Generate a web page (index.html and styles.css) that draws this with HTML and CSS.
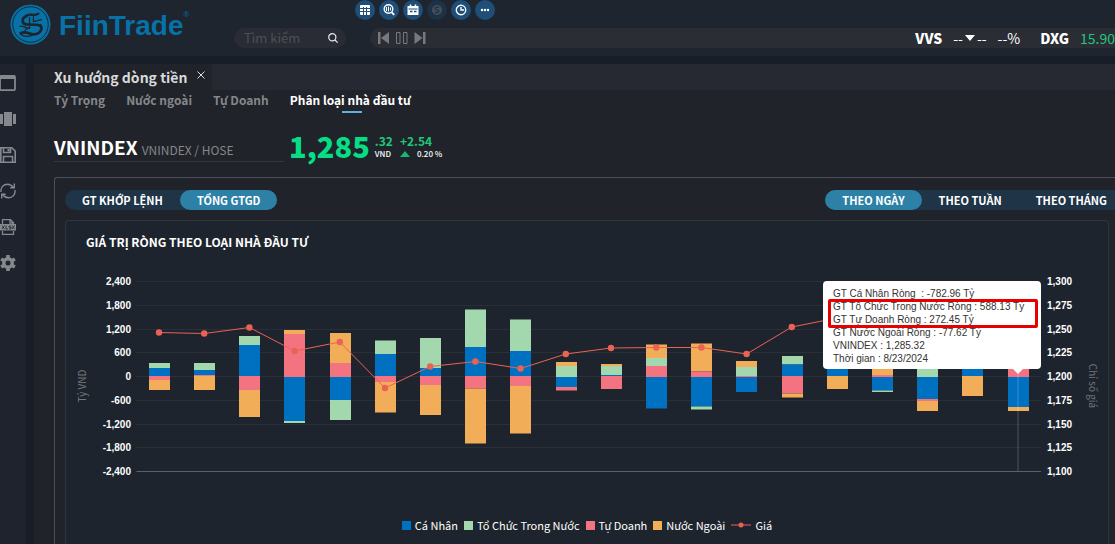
FILE: index.html
```html
<!DOCTYPE html>
<html lang="vi">
<head>
<meta charset="utf-8">
<title>FiinTrade</title>
<link rel="stylesheet" href="styles.css">
</head>
<body>
<header class="header">
  <a class="logo" href="#" aria-label="FiinTrade">
    <svg class="logo-mark" viewBox="0 0 42 42" aria-hidden="true">
      <circle cx="21" cy="21" r="20.5" fill="#0672a8"/>
      <circle cx="21" cy="21" r="18.200" fill="none" stroke="#1e252e" stroke-width="1"/>
      <g fill="none" stroke="#1e252e" stroke-linecap="round" stroke-linejoin="round">
        <path d="M17 12c4-3 6 1 12-2" stroke-width="2.400"/>
        <path d="M17 12c-6 3-5 9 1 9c5 0 9 0 13 1" stroke-width="2.800"/>
        <path d="M31 22c3 3 0 8-5 9c-6 1-9-4-15-1" stroke-width="2.800"/>
        <path d="M20 14v11M24 13v5l8-2M10 23c3-2 5 2 10 2M11 31c3 3 9 3 14 0M18 25c-3 1-4 4-1 5" stroke-width="1.300"/>
      </g>
    </svg>
    <span class="logo-name">FiinTrade</span><sup class="logo-reg">®</sup>
  </a>
  <div class="header-tools">
    <nav class="quick" aria-label="Công cụ">
      <button class="quick-btn" aria-label="Bảng giá"><svg viewBox="0 0 20 20"><rect x="5" y="5" width="10" height="10" rx="1" fill="#fff"/><path d="M5 8.500h10M5 11.500h10M8.500 7v8M11.500 7v8" stroke="#1f4f78"/></svg></button>
      <button class="quick-btn" aria-label="Tra cứu"><svg viewBox="0 0 20 20" fill="none" stroke="#fff"><circle cx="9.500" cy="9" r="4.300" stroke-width="1.400"/><path d="M12.700 12.300l2.500 2.600" stroke-width="1.800"/><path d="M7.500 7v4M9.500 6.500v5M11.500 7.500v3" /></svg></button>
      <button class="quick-btn" aria-label="Lịch sự kiện"><svg viewBox="0 0 20 20"><path d="M4.500 6h11v9h-11z" fill="#fff"/><path d="M7.500 4.500v3M12.500 4.500v3" stroke="#fff" stroke-width="1.600"/><path d="M5.500 9h9" stroke="#1f4f78"/><path d="M7 11.500h2.500M11 11.500h2.500" stroke="#1f4f78" stroke-width="1.500"/></svg></button>
      <button class="quick-btn quick-btn-off" aria-label="Giao dịch" disabled><svg viewBox="0 0 20 20"><circle cx="10" cy="10" r="5" fill="#46505c"/><path d="M12 7.800c-1-1-4-.8-4 .7s4 1.200 4 2.800s-3 1.700-4 .7" stroke="#1d3245" stroke-width="1.200" fill="none"/></svg></button>
      <button class="quick-btn" aria-label="Lịch sử"><svg viewBox="0 0 20 20" fill="none" stroke="#fff" stroke-width="1.400"><circle cx="10" cy="10" r="4.700"/><path d="M10 7v3h3"/></svg></button>
      <button class="quick-btn" aria-label="Thêm"><svg viewBox="0 0 20 20" fill="#fff"><circle cx="7" cy="10" r="1.200"/><circle cx="10" cy="10" r="1.200"/><circle cx="13" cy="10" r="1.200"/></svg></button>
    </nav>
    <div class="header-row">
      <form class="search">
        <input class="search-input" type="text" placeholder="Tìm kiếm" aria-label="Tìm kiếm">
        <button class="icon-btn" type="button" aria-label="Tìm"><svg width="10" height="10" viewBox="0 0 10 10" fill="none" stroke="#e8eaf0" stroke-width="1.200"><circle cx="4.300" cy="4.300" r="3.600"/><path d="M7 7l2.600 2.600"/></svg></button>
      </form>
      <div class="ticker">
        <div class="player">
          <button class="icon-btn" aria-label="Lùi"><svg width="12" height="12" viewBox="0 0 12 12" fill="#77797e"><path d="M0 0h2.500v12H0zM11 0v12L3 6z"/></svg></button>
          <button class="icon-btn" aria-label="Tạm dừng"><svg width="12" height="12" viewBox="0 0 12 12" fill="none" stroke="#77797e"><path d="M.5 .5h3.500v11H.5zM7.500 .5H11v11H7.500z"/></svg></button>
          <button class="icon-btn" aria-label="Tiến"><svg width="12" height="12" viewBox="0 0 12 12" fill="#77797e"><path d="M9 0h2.500v12H9zM.5 0v12l8-6z"/></svg></button>
        </div>
        <div class="quotes">
          <b>VVS</b><span class="quote-change">-- <svg width="10" height="6" viewBox="0 0 10 6"><path d="M0 0h10L5 6z" fill="#fff"/></svg>--</span><span>--%</span>
          <b class="quote-next">DXG</b><span class="up">15.90</span>
        </div>
      </div>
    </div>
  </div>
</header>

<div class="body">
  <aside class="sidebar">
    <button class="icon-btn" aria-label="Cửa sổ"><svg width="16" height="16" viewBox="0 0 16 16"><rect x="0" y=".9" width="15" height="14.200" rx="1" fill="none" stroke="#85888d" stroke-width="1.800"/><path d="M0 .5h15v3.500H0z" fill="#85888d"/></svg></button>
    <button class="icon-btn" aria-label="Bố cục"><svg width="16" height="16" viewBox="0 0 16 16" fill="#85888d"><path d="M4 1h8v14H4zM0 3h3v10H0zM13 3h3v10h-3z"/></svg></button>
    <button class="icon-btn" aria-label="Lưu"><svg width="16" height="16" viewBox="0 0 16 16" fill="none" stroke="#85888d" stroke-width="1.600"><path d="M.8 .8h11l3.400 3.400v11H.8z"/><path d="M3.500 1v4.500h7V1M3.500 15V9.500h9V15"/><path d="M8.500 2v2.500" stroke-width="2"/></svg></button>
    <button class="icon-btn" aria-label="Làm mới"><svg width="16" height="16" viewBox="0 0 16 16" fill="none" stroke="#85888d" stroke-width="1.400"><path d="M1 9c-.6-4.500 2.500-7.800 6.500-7.800c3 0 4.500 1.300 6 3.300M15 7c.6 4.500-2.500 7.800-6.500 7.800c-3 0-4.500-1.300-6-3.300"/><path d="M14.300 .5v4.300h-4M1.700 15.500v-4.300h4"/></svg></button>
    <button class="icon-btn" aria-label="Xuất Excel"><svg width="16" height="16" viewBox="0 0 16 16" fill="none" stroke="#85888d" stroke-width="1.300"><path d="M2.500 5V.7h8l3 3V5M2.500 12v3.300h11V12M10 1v3h3"/><path d="M0 5h16v6.500H0z" fill="#85888d" stroke="none"/><path d="M2 6.500l2.500 3.500M4.500 6.500L2 10M6 6.500V10h2M11 7H9v1.300h2V10H9M12 6.500l2.500 3.500M14.500 6.500L12 10" stroke="#1e232d" stroke-width=".8"/></svg></button>
    <button class="icon-btn" aria-label="Cài đặt"><svg width="16" height="16" viewBox="0 0 16 16"><circle cx="8" cy="8" r="4.200" fill="none" stroke="#85888d" stroke-width="3.400"/><path d="M8 0v3M8 13v3M1.100 4l2.600 1.500M12.300 10.500l2.600 1.500M1.100 12l2.600-1.500M12.300 5.500L14.900 4" stroke="#85888d" stroke-width="3.600"/></svg></button>
  </aside>

  <main class="main">
    <div class="tabbar">
      <div class="tab"><span class="tab-name">Xu hướng dòng tiền</span>
        <button class="icon-btn tab-close" aria-label="Đóng"><svg width="8" height="8" viewBox="0 0 8 8"><path d="M.5 .5l7 7M7.500 .5l-7 7" stroke="#e0e0e0"/></svg></button></div>
    </div>
    <nav class="subtabs">
      <a href="#">Tỷ Trọng</a><a href="#">Nước ngoài</a><a href="#">Tự Doanh</a><a href="#" class="is-active">Phân loại nhà đầu tư</a>
    </nav>
    <section class="index">
      <div class="index-name"><h1 class="index-code">VNINDEX</h1><span class="index-market">VNINDEX / HOSE</span></div>
      <strong class="index-price">1,285</strong>
      <div class="index-col"><span class="index-dec">.32</span><span class="index-unit">VND</span></div>
      <div class="index-col"><span class="index-dec">+2.54</span><span class="index-unit index-pct"><svg width="10" height="6" viewBox="0 0 10 6"><path d="M0 6h10L5 0z" fill="#16b877"/></svg>0.20 %</span></div>
    </section>

    <section class="panel">
      <div class="toggles">
        <div class="pill"><button class="pill-btn">GT KHỚP LỆNH</button><button class="pill-btn is-on">TỔNG GTGD</button></div>
        <div class="pill pill-right"><button class="pill-btn is-on">THEO NGÀY</button><button class="pill-btn">THEO TUẦN</button><button class="pill-btn">THEO THÁNG</button></div>
      </div>
      <article class="card">
        <h2 class="card-title">GIÁ TRỊ RÒNG THEO LOẠI NHÀ ĐẦU TƯ</h2>
        <div class="chart">
          <svg class="chart-svg" id="chart" viewBox="66 262 1042 230" role="img" aria-label="Giá trị ròng theo loại nhà đầu tư"></svg>
          <div class="tooltip">
            <div>GT Cá Nhân Ròng &nbsp;: -782.96 Tỷ</div>
            <div>GT Tổ Chức Trong Nước Ròng : 588.13 Tỷ</div>
            <div>GT Tự Doanh Ròng : 272.45 Tỷ</div>
            <div>GT Nước Ngoài Ròng : -77.62 Tỷ</div>
            <div>VNINDEX : 1,285.32</div>
            <div>Thời gian : 8/23/2024</div>
            <span class="marker"></span>
          </div>
        </div>
        <ul class="legend">
          <li><i class="swatch swatch-blue"></i>Cá Nhân</li>
          <li><i class="swatch swatch-green"></i>Tổ Chức Trong Nước</li>
          <li><i class="swatch swatch-pink"></i>Tự Doanh</li>
          <li><i class="swatch swatch-orange"></i>Nước Ngoài</li>
          <li><svg class="legend-line" width="20" height="8" viewBox="0 0 20 8"><path d="M0 4h20" stroke="#ea6254"/><circle cx="10" cy="4" r="2.500" fill="#ea6254"/></svg>Giá</li>
        </ul>
      </article>
    </section>
  </main>
</div>
<script src="chart.js"></script>
</body>
</html>
```

FILE: styles.css
```css
* { box-sizing: border-box; }
body {
  margin: 0;
  min-height: 100vh;
  display: flex;
  flex-direction: column;
  overflow: hidden;
  background: #191d27;
  color: #fff;
  font-family: "Noto Sans CJK SC", "Noto Sans", sans-serif;
  font-size: 12px;
  line-height: 20px;
}
button, input { font: inherit; color: inherit; border: 0; background: none; padding: 0; margin: 0; }
svg { display: block; }
a { color: inherit; text-decoration: none; }
.icon-btn { display: flex; }
.up { color: #1fc77c; }

.header { display: flex; height: 56px; padding-left: 10px; background: #1e252e; }
.logo { display: flex; flex: none; width: 224px; color: #0672a8; padding-top: 4px; }
.logo-mark { width: 41px; height: 41px; margin-right: 8px; }
.logo-name { font: bold 28px/44px "Liberation Sans", Arial, sans-serif; }
.logo-reg { font: 8px/22px "Liberation Sans", Arial, sans-serif; }
.header-tools { flex: 1; min-width: 0; display: flex; flex-direction: column; gap: 8px; }
.quick { display: flex; gap: 4px; padding-left: 121px; }
.quick-btn { width: 20px; height: 20px; border-radius: 50%; background: #1f4f78; }
.quick-btn-off { background: #1d3245; }
.header-row { display: flex; gap: 24px; }
.search { display: flex; align-items: center; width: 112px; height: 20px; padding: 0 8px 0 10px; border-radius: 10px; background: #292c34; }
.search-input { flex: 1; min-width: 0; height: 20px; font-size: 13px; outline: 0; }
.search-input::placeholder { color: #4d5057; opacity: 1; }
.ticker { flex: 1; display: flex; justify-content: space-between; align-items: center; height: 20px; padding-left: 8px; border-radius: 10px 0 0 10px; background: #2a2d34; }
.player { display: flex; gap: 6px; }
.quotes { display: flex; gap: 11px; font-size: 14px; line-height: 18px; white-space: nowrap; }
.quotes b { font-weight: 900; }
.quote-change { display: flex; align-items: center; gap: 2px; }
.quotes .quote-next { margin-left: 9px; }

.body { flex: 1; display: flex; gap: 8px; padding-top: 8px; }
.sidebar { flex: none; width: 26px; display: flex; flex-direction: column; gap: 20px; padding-top: 11px; background: #1e232d; }
.main { flex: 1; min-width: 0; display: flex; flex-direction: column; background: #202329; }
.tabbar { display: flex; height: 26px; background: #262932; }
.tab { display: flex; gap: 10px; padding: 0 7px 0 20px; background: #202329; }
.tab-name { font-size: 14px; line-height: 26px; font-weight: bold; color: #d8d9da; }
.tab-close { margin-top: 7px; height: 8px; }
.subtabs { display: flex; gap: 21px; padding-left: 20px; font-weight: bold; color: #85878b; }
.subtabs a { position: relative; }
.subtabs .is-active { color: #fff; }
.is-active::after { content: ""; position: absolute; left: 50%; bottom: -3px; width: 20px; height: 2px; margin-left: -8px; background: #5db3dd; }
.index { display: flex; height: 67px; padding: 20px 0 15px 20px; }
.index-name { display: flex; align-items: baseline; width: 230px; gap: 4px; border-bottom: 1px solid #34373c; }
.index-code { margin: 0; font-size: 19px; line-height: 34px; }
.index-market { color: #85878b; }
.index-price { margin: 0 5px 0 5px; color: #05dd87; font-size: 29px; font-weight: 900; line-height: 30px; }
.index-col { display: flex; flex-direction: column; margin-right: 7px; padding-top: 4px; }
.index-dec { font-size: 12px; line-height: 14px; color: #1fc77c; font-weight: bold; }
.index-unit { font-size: 8px; line-height: 12px; font-weight: 500; }
.index-pct { display: flex; align-items: center; gap: 7px; }

.panel { flex: 1; display: flex; flex-direction: column; margin-left: 20px; padding: 12px 6px 0 10px; border: 1px solid #4c4f55; border-width: 1px 0 0 1px; border-radius: 3px 0 0 0; }
.toggles { display: flex; justify-content: space-between; margin-bottom: 10px; }
.pill { display: flex; border-radius: 10px; background: #1f3446; }
.pill-right { margin-right: -15px; }
.pill-btn { height: 20px; padding: 0 17px; border-radius: 10px; font-size: 11px; line-height: 18px; font-weight: bold; white-space: nowrap; }
.pill-btn.is-on { background: #2d80a6; }
.card { flex: 1; border: 1px solid #30343b; border-bottom: 0; border-radius: 4px 4px 0 0; background: #1e242d; }
.card-title { margin: 0; padding: 11px 20px 10px; font-size: 12px; line-height: 20px; }
.chart { position: relative; }
.chart-svg { width: 100%; }
.grid { stroke: #2a2f38; }
.axis { stroke: #5c6067; }
.tick { fill: #fff; font: bold 10px "Liberation Sans", Arial, sans-serif; }
.axis-name { fill: #73767c; font-size: 10px; }
.blue { fill: #0070c0; } .green { fill: #a3d7ad; } .pink { fill: #f37381; } .orange { fill: #f1ad58; }
.price { fill: none; stroke: #ea6254; }
.dot { fill: #ea6254; }
.tooltip { position: absolute; right: 67px; top: 19px; width: 218px; padding: 6px 10px 4px; border-radius: 4px; background: #fff; color: #333; font: 10px/13px "Liberation Sans", Arial, sans-serif; white-space: nowrap; }
.tooltip::after { content: ""; position: absolute; right: 18px; bottom: -5px; border: 5px solid transparent; border-width: 5px 5px 0; border-top-color: #fff; }
.marker { position: absolute; left: 5px; top: 18px; width: 210px; height: 29px; border: 3px solid #e60000; border-radius: 2px; }
.legend { display: flex; justify-content: center; gap: 6px; margin: 0; padding: 23px 0 0; list-style: none; font-size: 11px; line-height: 20px; }
.legend li { display: flex; align-items: center; gap: 4px; }
.swatch { width: 9px; height: 9px; }
.swatch-blue { background: #0070c0; } .swatch-green { background: #a3d7ad; } .swatch-pink { background: #f37381; } .swatch-orange { background: #f1ad58; }
```

FILE: chart.js
```js
const svg = document.getElementById("chart");
const names = { b: "blue", g: "green", p: "pink", o: "orange" };
// Each bar: top edge, then colour and bottom edge of every segment.
const bars = [
  [363, "g", 368, "b", 376, "p", 380, "o", 390],
  [363, "g", 370, "b", 375, "p", 376, "o", 390],
  [336, "g", 345, "b", 376, "p", 390, "o", 417],
  [330, "o", 334, "p", 377, "b", 421, "g", 423],
  [333, "o", 363, "p", 377, "b", 400, "g", 420],
  [340.5, "g", 354, "b", 376, "p", 382, "o", 412.5],
  [338, "g", 368, "b", 376, "p", 385, "o", 415],
  [309.5, "g", 347, "b", 376, "p", 388.5, "o", 443.5],
  [319.5, "g", 351, "b", 376, "p", 386, "o", 433.5],
  [362, "o", 366, "g", 377, "b", 387, "p", 390.5],
  [364, "o", 366, "g", 375, "b", 376, "p", 389],
  [344.5, "o", 358, "g", 366, "p", 377, "b", 408.5],
  [343.5, "o", 371.5, "p", 377, "b", 406.5, "g", 409.5],
  [361, "o", 367, "g", 376, "p", 377, "b", 392],
  [356, "g", 364.5, "b", 376, "p", 393.5, "o", 397.5],
  [360, "b", 376, "o", 389],
  [360, "o", 375, "p", 377, "b", 390.5, "g", 392],
  [360, "g", 377, "b", 399, "p", 401, "o", 411],
  [360, "b", 376, "o", 396],
  [360, "p", 377, "b", 407, "o", 411]
];
const price = [332.5, 333.5, 327.5, 351, 342, 388, 366.5, 361.5, 368.5, 354, 348, 347.5, 347.5, 354, 327, 318];
const x = i => 159 + 45.2 * i;
let out = "";
for (let k = 0; k <= 8; k++) {
  const y = Math.round(281 + 23.75 * k) + 0.5;
  out += `<path class="${k === 8 ? "axis" : "grid"}" d="M136.500 ${y}H1041"/>`;
  out += `<text class="tick" x="131" y="${y + 3.5}" text-anchor="end">${(2400 - 600 * k).toLocaleString("en-US")}</text>`;
  out += `<text class="tick" x="1047" y="${y + 3.5}">${(1300 - 25 * k).toLocaleString("en-US")}</text>`;
}
bars.forEach((bar, i) => {
  const left = Math.round(x(i) - 10.2);
  for (let j = 1; j < bar.length; j += 2) {
    out += `<rect class="${names[bar[j]]}" x="${left}" y="${bar[j - 1]}" width="21" height="${bar[j + 1] - bar[j - 1]}"/>`;
  }
});
out += `<path d="M1018 370V471" stroke="#fff" stroke-opacity=".15" stroke-width="1.500"/>`;
out += `<polyline class="price" points="${price.map((y, i) => x(i) + "," + y).join(" ")}"/>`;
price.forEach((y, i) => { out += `<circle class="dot" cx="${x(i)}" cy="${y}" r="3.200"/>`; });
out += `<text class="axis-name" text-anchor="middle" transform="translate(86 386) rotate(-90)">Tỷ VND</text>`;
out += `<text class="axis-name" text-anchor="middle" transform="translate(1089 386) rotate(90)">Chỉ số giá</text>`;
svg.innerHTML = out;
```
